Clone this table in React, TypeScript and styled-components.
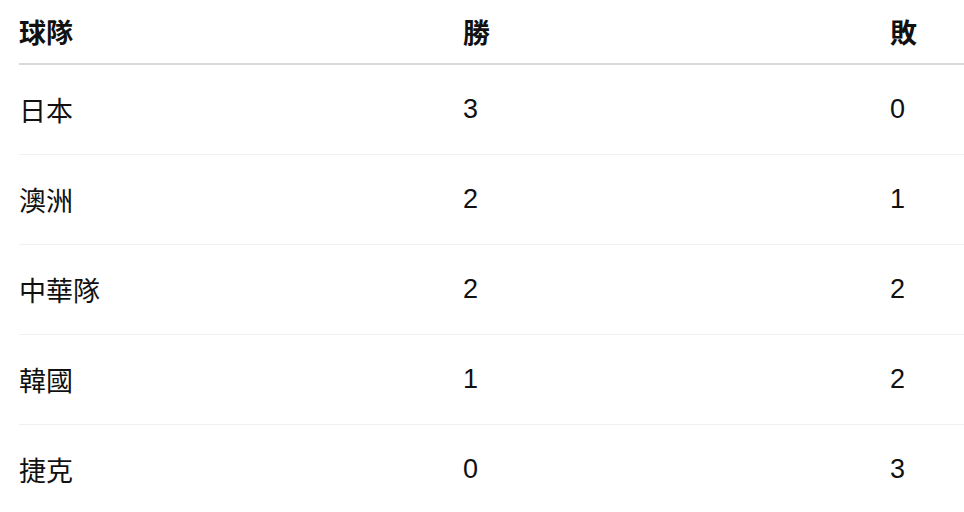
import React from 'react';
import styled, { createGlobalStyle } from 'styled-components';

const GlobalStyle = createGlobalStyle`
  html, body {
    margin: 0;
    padding: 0;
    background: #ffffff;
  }
  body {
    font-family: 'Liberation Sans', 'Noto Sans CJK TC', sans-serif;
    color: #111111;
  }
`;

const standings = [
  { team: '日本', win: 3, loss: 0 },
  { team: '澳洲', win: 2, loss: 1 },
  { team: '中華隊', win: 2, loss: 2 },
  { team: '韓國', win: 1, loss: 2 },
  { team: '捷克', win: 0, loss: 3 }
];

const App = () => {
  return (
    <>
      <GlobalStyle />
      <Page>
        <Table>
          <HeadRow>
            <HeadCell>球隊</HeadCell>
            <HeadCell>勝</HeadCell>
            <HeadCell>敗</HeadCell>
          </HeadRow>
          {standings.map((row, idx) => (
            <Row key={row.team} last={idx === standings.length - 1}>
              <Cell>{row.team}</Cell>
              <Cell>{row.win}</Cell>
              <Cell>{row.loss}</Cell>
            </Row>
          ))}
        </Table>
      </Page>
    </>
  );
};

export default App;

const Page = styled.div`
  padding-left: 19px;
  width: 945px;
`;

const Table = styled.div`
  display: flex;
  flex-direction: column;
`;

const HeadRow = styled.div`
  display: grid;
  grid-template-columns: 444px 427px 1fr;
  align-items: center;
  height: 63px;
  border-bottom: 2px solid #d9d9d9;
`;

const HeadCell = styled.div`
  font-size: 27px;
  font-weight: 700;
  color: #111111;
`;

const Row = styled.div<{ last: boolean }>`
  display: grid;
  grid-template-columns: 444px 427px 1fr;
  align-items: center;
  height: 89px;
  border-bottom: ${(props) => (props.last ? 'none' : '1px solid #f0f0f0')};
`;

const Cell = styled.div`
  font-size: 27px;
  color: #111111;
`;
